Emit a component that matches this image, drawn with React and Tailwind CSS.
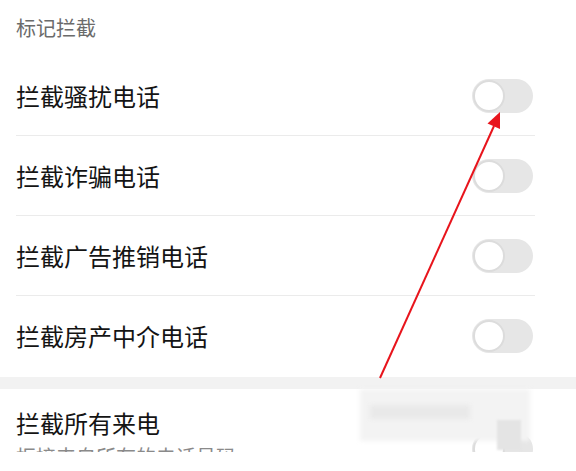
import React from 'react';

const font = { fontFamily: '"Noto Sans CJK SC", "Noto Sans", sans-serif' };

const Toggle = () => (
  <div className="w-[61px] h-[34px] rounded-full bg-[#e6e6e6] p-[1px] flex items-center">
    <div className="w-[32px] h-[32px] rounded-full bg-white border-2 border-[#dcdcdc]" />
  </div>
);

const Row = ({ label, last }) => (
  <div
    className={`h-[80px] ml-4 mr-[41px] flex items-center justify-between pr-[2px] ${
      last ? '' : 'border-b border-[#ebebeb]'
    }`}
  >
    <span className="text-[24px] text-[#141414] leading-none">{label}</span>
    <Toggle />
  </div>
);

const items = ['拦截骚扰电话', '拦截诈骗电话', '拦截广告推销电话', '拦截房产中介电话'];

export default function App() {
  return (
    <div className="w-[576px] h-[471px] bg-white relative overflow-hidden" style={font}>
      <div className="h-[452px] overflow-hidden">
        <div className="h-[56px] pl-4 flex items-center text-[20px] text-[#6b6b6b]">标记拦截</div>
        {items.map((t, i) => (
          <Row key={t} label={t} last={i === items.length - 1} />
        ))}
        <div className="h-[12px] bg-[#f2f2f2] mt-[1px]" />
        <div className="ml-4 mr-[41px] pt-[19px] flex justify-between pr-[2px]">
          <div>
            <div className="text-[24px] leading-[30px] text-[#141414]">拦截所有来电</div>
            <div className="text-[20px] leading-[26px] text-[#8a8a8a] mt-[6px]">拒接来自所有的电话号码</div>
          </div>
          <div className="pt-[24px]">
            <Toggle />
          </div>
        </div>
      </div>

      {/* blurred watermark */}
      <div className="absolute left-[360px] top-[389px] w-[170px] h-[52px] bg-[#f3f3f3] blur-[2px]" />
      <div className="absolute left-[370px] top-[405px] w-[100px] h-[14px] bg-[#e9e9e9] blur-[2px]" />
      <div className="absolute left-[497px] top-[420px] w-[24px] h-[30px] bg-[#e4e4e4] blur-[1px]" />

      <svg className="absolute left-0 top-0" width="576" height="471" viewBox="0 0 576 471">
        <line x1="380" y1="378" x2="494" y2="126" stroke="#e8141c" strokeWidth="2" />
        <polygon points="500,112 487.5,123.5 500,129" fill="#e8141c" />
      </svg>
    </div>
  );
}
